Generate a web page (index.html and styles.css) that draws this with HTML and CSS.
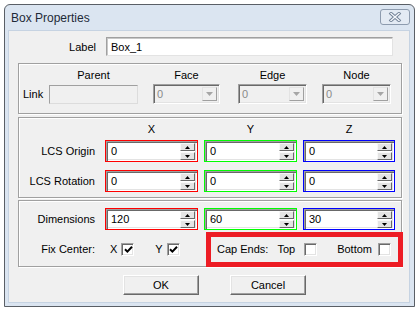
FILE: index.html
```html
<!DOCTYPE html>
<html>
<head>
<meta charset="utf-8">
<link rel="stylesheet" href="styles.css">
</head>
<body>
<div class="window">
  <div class="titlebar">
    <span class="title">Box Properties</span>
    <span class="close">
      <svg width="14" height="10" viewBox="0 0 14 10"><path d="M3 1.5 L11 8.5 M11 1.5 L3 8.5" stroke="#6f7f94" stroke-width="3.2" stroke-linecap="square" fill="none"/><path d="M3 1.5 L11 8.5 M11 1.5 L3 8.5" stroke="#f4f7fb" stroke-width="1.4" stroke-linecap="square" fill="none"/></svg>
    </span>
  </div>
  <div class="client">
    <div class="label-row">
      <span class="lbl">Label</span>
      <div class="textbox">Box_1</div>
    </div>

    <div class="group g1">
      <div class="link-row head">
        <span class="c-link"></span>
        <span class="c-parent">Parent</span>
        <span class="c-face">Face</span>
        <span class="c-edge">Edge</span>
        <span class="c-node">Node</span>
      </div>
      <div class="link-row">
        <span class="c-link">Link</span>
        <div class="c-parent disabled-box"></div>
        <div class="c-face combo"><span>0</span><i class="drop"><svg width="7" height="4" viewBox="0 0 7 4"><path d="M0 0 H7 L3.5 4 Z" fill="#a6a6a6"/></svg></i></div>
        <div class="c-edge combo"><span>0</span><i class="drop"><svg width="7" height="4" viewBox="0 0 7 4"><path d="M0 0 H7 L3.5 4 Z" fill="#a6a6a6"/></svg></i></div>
        <div class="c-node combo"><span>0</span><i class="drop"><svg width="7" height="4" viewBox="0 0 7 4"><path d="M0 0 H7 L3.5 4 Z" fill="#a6a6a6"/></svg></i></div>
      </div>
    </div>

    <div class="group g2">
      <div class="grid head">
        <span></span><span class="ctr">X</span><span class="ctr">Y</span><span class="ctr">Z</span>
      </div>
      <div class="grid row">
        <span class="rl">LCS Origin</span>
        <div class="spin red"><span>0</span><b class="btns"><i><svg width="5" height="3" viewBox="0 0 5 3"><path d="M2.5 0 L5 3 H0 Z"/></svg></i><i><svg width="5" height="3" viewBox="0 0 5 3"><path d="M0 0 H5 L2.5 3 Z"/></svg></i></b></div>
        <div class="spin green"><span>0</span><b class="btns"><i><svg width="5" height="3" viewBox="0 0 5 3"><path d="M2.5 0 L5 3 H0 Z"/></svg></i><i><svg width="5" height="3" viewBox="0 0 5 3"><path d="M0 0 H5 L2.5 3 Z"/></svg></i></b></div>
        <div class="spin blue"><span>0</span><b class="btns"><i><svg width="5" height="3" viewBox="0 0 5 3"><path d="M2.5 0 L5 3 H0 Z"/></svg></i><i><svg width="5" height="3" viewBox="0 0 5 3"><path d="M0 0 H5 L2.5 3 Z"/></svg></i></b></div>
      </div>
      <div class="grid row r2">
        <span class="rl">LCS Rotation</span>
        <div class="spin red"><span>0</span><b class="btns"><i><svg width="5" height="3" viewBox="0 0 5 3"><path d="M2.5 0 L5 3 H0 Z"/></svg></i><i><svg width="5" height="3" viewBox="0 0 5 3"><path d="M0 0 H5 L2.5 3 Z"/></svg></i></b></div>
        <div class="spin green"><span>0</span><b class="btns"><i><svg width="5" height="3" viewBox="0 0 5 3"><path d="M2.5 0 L5 3 H0 Z"/></svg></i><i><svg width="5" height="3" viewBox="0 0 5 3"><path d="M0 0 H5 L2.5 3 Z"/></svg></i></b></div>
        <div class="spin blue"><span>0</span><b class="btns"><i><svg width="5" height="3" viewBox="0 0 5 3"><path d="M2.5 0 L5 3 H0 Z"/></svg></i><i><svg width="5" height="3" viewBox="0 0 5 3"><path d="M0 0 H5 L2.5 3 Z"/></svg></i></b></div>
      </div>
    </div>

    <div class="group g3">
      <div class="grid row">
        <span class="rl">Dimensions</span>
        <div class="spin red"><span>120</span><b class="btns"><i><svg width="5" height="3" viewBox="0 0 5 3"><path d="M2.5 0 L5 3 H0 Z"/></svg></i><i><svg width="5" height="3" viewBox="0 0 5 3"><path d="M0 0 H5 L2.5 3 Z"/></svg></i></b></div>
        <div class="spin green"><span>60</span><b class="btns"><i><svg width="5" height="3" viewBox="0 0 5 3"><path d="M2.5 0 L5 3 H0 Z"/></svg></i><i><svg width="5" height="3" viewBox="0 0 5 3"><path d="M0 0 H5 L2.5 3 Z"/></svg></i></b></div>
        <div class="spin blue"><span>30</span><b class="btns"><i><svg width="5" height="3" viewBox="0 0 5 3"><path d="M2.5 0 L5 3 H0 Z"/></svg></i><i><svg width="5" height="3" viewBox="0 0 5 3"><path d="M0 0 H5 L2.5 3 Z"/></svg></i></b></div>
      </div>
      <div class="grid fix-row">
        <span class="rl">Fix Center:</span>
        <div class="checks">
          <span class="ck-lbl">X</span>
          <span class="check"><svg width="9" height="9" viewBox="0 0 9 9"><path d="M1 4.2 L3.4 6.6 L8 1.8" stroke="#000" stroke-width="2" fill="none"/></svg></span>
          <span class="ck-lbl y">Y</span>
          <span class="check"><svg width="9" height="9" viewBox="0 0 9 9"><path d="M1 4.2 L3.4 6.6 L8 1.8" stroke="#000" stroke-width="2" fill="none"/></svg></span>
        </div>
        <div class="caps">
          <span class="cap-lbl">Cap Ends:</span>
          <span class="top-lbl">Top</span>
          <span class="check"></span>
          <span class="bot-lbl">Bottom</span>
          <span class="check"></span>
        </div>
      </div>
      <div class="highlight"></div>
    </div>

    <div class="buttons">
      <button class="btn">OK</button>
      <button class="btn">Cancel</button>
    </div>
  </div>
</div>
</body>
</html>
```
FILE: styles.css
```css
html, body {
  margin: 0;
  background: #ffffff;
}
body {
  font-family: "Liberation Sans", Arial, sans-serif;
  font-size: 11px;
  color: #000;
  white-space: nowrap;
}
.window {
  margin: 4px 0 0 4px;
  width: 411px;
  height: 303px;
  box-sizing: border-box;
  border: 1px solid #5a5f66;
  border-radius: 6px 6px 0 0;
  background: #dbe5f1;
  padding: 0 4px 3px 3px;
  display: flex;
  flex-direction: column;
}
.titlebar {
  height: 25px;
  display: flex;
  justify-content: space-between;
  align-items: center;
  flex: none;
}
.title {
  padding-left: 3px;
  font-size: 12px;
  color: #1e2a38;
}
.close {
  align-self: flex-start;
  margin-top: 4px;
  width: 30px;
  height: 16px;
  box-sizing: border-box;
  border: 1px solid #8d9bae;
  border-radius: 3px;
  background: #e3eaf3;
  display: flex;
  align-items: center;
  justify-content: center;
}
.client {
  flex: 1;
  background: #f0f0f0;
  padding: 7px 8px 0 10px;
  box-shadow: inset 0 0 0 1px #c6d3e2;
}
.label-row {
  display: grid;
  grid-template-columns: 78px 287px;
  column-gap: 10px;
  align-items: center;
  height: 19px;
}
.lbl, .rl {
  text-align: right;
}
.textbox {
  height: 19px;
  box-sizing: border-box;
  background: #fff;
  border: 1px solid;
  border-color: #a0a0a0 #e3e3e3 #e3e3e3 #a0a0a0;
  box-shadow: inset 1px 1px 0 #c8c8c8;
  padding: 2px 0 0 4px;
  line-height: 14px;
}
.group {
  border: 1px solid #a0a0a0;
  box-shadow: inset 1px 1px 0 #fff, 1px 1px 0 #fff;
}
.g1 {
  margin-top: 7px;
  height: 51px;
  box-sizing: border-box;
  padding: 3px 0 0 4px;
}
.link-row {
  display: flex;
  align-items: center;
  height: 20px;
}
.link-row.head {
  height: 16px;
  margin-bottom: 1px;
}
.link-row.head span {
  text-align: center;
}
.c-link { width: 26px; flex: none; }
.c-parent { width: 89px; flex: none; }
.c-face { width: 67px; flex: none; margin-left: 15px; }
.c-edge { width: 69px; flex: none; margin-left: 18px; }
.c-node { width: 69px; flex: none; margin-left: 15px; }
.disabled-box {
  height: 19px;
  box-sizing: border-box;
  background: #f0f0f0;
  border: 1px solid;
  border-color: #a0a0a0 #dcdcdc #dcdcdc #a0a0a0;
}
.combo {
  height: 20px;
  box-sizing: border-box;
  background: #f0f0f0;
  border: 1px solid;
  border-color: #a0a0a0 #fff #fff #a0a0a0;
  box-shadow: inset 1px 1px 0 #696969, inset -1px -1px 0 #e3e3e3;
  display: flex;
  align-items: center;
  justify-content: space-between;
  padding: 0 2px 0 3px;
  color: #8a8a8a;
}
.drop {
  width: 15px;
  height: 14px;
  box-sizing: border-box;
  border: 1px solid;
  border-color: #e3e3e3 #a0a0a0 #a0a0a0 #e3e3e3;
  background: #f0f0f0;
  display: flex;
  align-items: center;
  justify-content: center;
}
.drop svg { display: block; }
.g2 {
  margin-top: 3px;
  height: 81px;
  box-sizing: border-box;
  padding-top: 4px;
}
.grid {
  display: grid;
  grid-template-columns: 80px 93px 93px 92px;
  column-gap: 6px;
  align-items: center;
}
.grid.head {
  height: 14px;
  margin-bottom: 4px;
}
.ctr { text-align: center; }
.rl { padding-right: 4px; }
.grid.row { height: 22px; }
.grid.r2 { margin-top: 8px; }
.spin {
  height: 22px;
  box-sizing: border-box;
  border: 1px solid;
  position: relative;
  display: flex;
  align-items: center;
  background: #fff;
  box-shadow: inset 1px 1px 0 #a0a0a0, inset 2px 2px 0 #696969, inset -1px -1px 0 #fff, inset -2px -2px 0 #e3e3e3;
  padding-left: 5px;
}
.spin.red { border-color: #ff0000; }
.spin.green { border-color: #00ff00; }
.spin.blue { border-color: #0000ff; }
.btns {
  position: absolute;
  right: 2px;
  top: 2px;
  width: 15px;
  display: flex;
  flex-direction: column;
  gap: 0;
}
.btns i {
  height: 8px;
  box-sizing: border-box;
  border: 1px solid;
  border-color: #f8f8f8 #696969 #696969 #f8f8f8;
  background: #e4e4e4;
  display: flex;
  align-items: center;
  justify-content: center;
  margin-bottom: 1px;
}
.btns svg { display: block; }
.g3 {
  position: relative;
  margin-top: 2px;
  height: 67px;
  box-sizing: border-box;
  padding-top: 7px;
}
.fix-row {
  height: 20px;
  margin-top: 9px;
}
.checks {
  display: flex;
  align-items: center;
  padding-left: 5px;
}
.ck-lbl { margin-right: 4px; }
.ck-lbl.y { margin-left: 21px; }
.check {
  width: 13px;
  height: 13px;
  box-sizing: border-box;
  background: #fff;
  border: 1px solid;
  border-color: #a0a0a0 #fff #fff #a0a0a0;
  box-shadow: inset 1px 1px 0 #696969, inset -1px -1px 0 #e3e3e3;
  display: flex;
  align-items: center;
  justify-content: center;
  flex: none;
}
.check svg { display: block; margin-left: 1px; }
.caps {
  grid-column: 3 / 5;
  display: flex;
  align-items: center;
  padding-left: 13px;
}
.top-lbl { margin-left: 9px; margin-right: 9px; }
.bot-lbl { margin-left: 20px; margin-right: 6px; }
.highlight {
  position: absolute;
  left: 187px;
  top: 31px;
  width: 197px;
  height: 35px;
  box-sizing: border-box;
  border: 5px solid #ed1c24;
}
.buttons {
  display: flex;
  gap: 31px;
  margin-top: 8px;
  padding-left: 105px;
}
.btn {
  width: 76px;
  height: 20px;
  box-sizing: border-box;
  font-family: "Liberation Sans", Arial, sans-serif;
  font-size: 11px;
  color: #000;
  background: #f0f0f0;
  border: 1px solid;
  border-color: #fff #696969 #696969 #fff;
  box-shadow: inset -1px -1px 0 #a0a0a0, inset 1px 1px 0 #e3e3e3;
  padding: 0;
}
```
